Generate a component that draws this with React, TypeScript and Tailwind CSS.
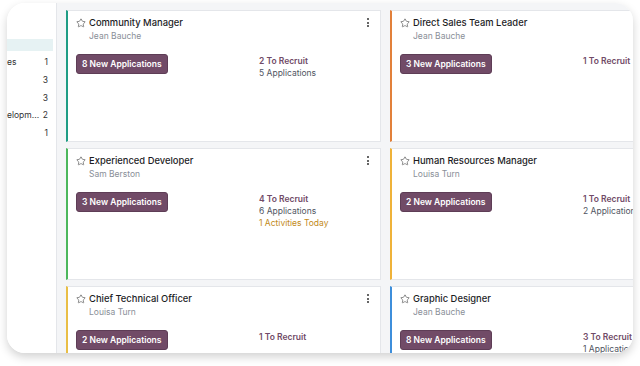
import { Star } from 'lucide-react';

type Job = {
  title: string;
  owner: string;
  newApps: number;
  toRecruit: number;
  apps?: string;
  activities?: string;
  bar: string;
};

const jobs: Job[] = [
  { title: 'Community Manager', owner: 'Jean Bauche', newApps: 8, toRecruit: 2, apps: '5 Applications', bar: 'border-l-[#1f9d85]' },
  { title: 'Direct Sales Team Leader', owner: 'Jean Bauche', newApps: 3, toRecruit: 1, bar: 'border-l-[#e2803a]' },
  { title: 'Experienced Developer', owner: 'Sam Berston', newApps: 3, toRecruit: 4, apps: '6 Applications', activities: '1 Activities Today', bar: 'border-l-[#4cb75c]' },
  { title: 'Human Resources Manager', owner: 'Louisa Turn', newApps: 2, toRecruit: 1, apps: '2 Applications', bar: 'border-l-[#efb239]' },
  { title: 'Chief Technical Officer', owner: 'Louisa Turn', newApps: 2, toRecruit: 1, bar: 'border-l-[#e9be45]' },
  { title: 'Graphic Designer', owner: 'Jean Bauche', newApps: 8, toRecruit: 3, apps: '1 Applications', bar: 'border-l-[#3d8edb]' },
];

const sideRows = [
  { label: 'es', count: 1 },
  { label: '', count: 3 },
  { label: '', count: 3 },
  { label: 'elopm...', count: 2 },
  { label: '', count: 1 },
];

function JobCard({ job }: { job: Job }) {
  return (
    <div className={`relative h-[132px] bg-white border border-[#e4e6ea] border-l-2 ${job.bar} pl-[8px] pt-[5px]`}>
      {/* kebab */}
      <div className="absolute right-[11px] top-[7px] flex flex-col gap-[1.5px]">
        <span className="block w-[2px] h-[2px] rounded-full bg-[#333]" />
        <span className="block w-[2px] h-[2px] rounded-full bg-[#333]" />
        <span className="block w-[2px] h-[2px] rounded-full bg-[#333]" />
      </div>

      {/* Header */}
      <div className="flex items-start gap-[3px]">
        <Star size={10} strokeWidth={1.6} className="text-[#555] mt-[2px]" />
        <div>
          <div className="text-[9.4px] leading-[13px] font-medium text-[#1d1d1f]">{job.title}</div>
          <div className="text-[8.5px] leading-[13px] text-[#8a8f98] mt-[1px]">{job.owner}</div>
        </div>
      </div>

      {/* Body */}
      <div className="flex mt-[10px]">
        <div className="w-[183px] shrink-0 pt-[1px] flex items-start">
          <button className="block h-[20px] px-[5px] rounded-[3px] bg-[#714b67] border border-[#5e3d56] text-white text-[8.5px] font-semibold whitespace-nowrap">
            {job.newApps} New Applications
          </button>
        </div>
        <div className="pt-[2px] text-[8.5px] leading-[12px] whitespace-nowrap">
          <div className="font-semibold text-[#714b67]">{job.toRecruit} To Recruit</div>
          {job.apps && <div className="text-[#505562]">{job.apps}</div>}
          {job.activities && <div className="text-[#c28a1a]">{job.activities}</div>}
        </div>
      </div>
    </div>
  );
}

export default function App() {
  return (
    <div
      className="w-[640px] h-[366px] bg-white overflow-hidden pl-[7px] pt-[3px]"
      style={{ fontFamily: 'Inter, "Noto Sans", sans-serif' }}
    >
      <div className="w-[626px] h-[350px] rounded-[18px] overflow-hidden bg-white flex shadow-[0_4px_10px_rgba(0,0,0,0.18)]">
        {/* Sidebar */}
        <div className="w-[50px] shrink-0 bg-white border-r border-[#e4e6ea]">
          <div className="mt-[33px] h-[18px] py-[3px] pr-[3px]">
            <div className="h-full bg-[#e6f2f3]" />
          </div>
          {sideRows.map((r, i) => (
            <div key={i} className="h-[17.6px] flex items-center justify-between pr-[8px] text-[8.5px] text-[#333]">
              <span className="whitespace-nowrap">{r.label}</span>
              <span>{r.count}</span>
            </div>
          ))}
        </div>

        {/* Kanban */}
        <div className="flex-1 bg-[#f4f5f7] pl-[9px] pt-[7px] overflow-hidden">
          <div className="grid grid-cols-[315px_315px] gap-x-[9px] gap-y-[6px]">
            {jobs.map((j) => (
              <JobCard key={j.title} job={j} />
            ))}
          </div>
        </div>
      </div>
    </div>
  );
}
